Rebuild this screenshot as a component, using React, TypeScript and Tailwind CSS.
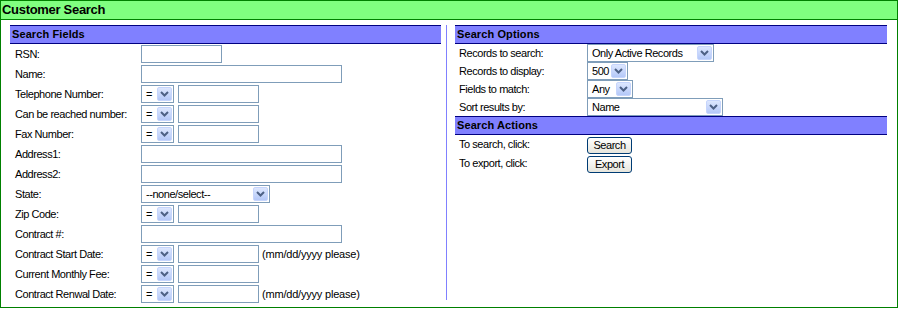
import React from 'react';

function Chevron() {
  return (
    <svg width="9" height="6" viewBox="0 0 9 6" className="block">
      <polyline points="1,1 4.5,4.5 8,1" fill="none" stroke="#4d6185" strokeWidth="2" />
    </svg>
  );
}

function Select({ value, className }: { value: string; className: string }) {
  return (
    <div className={`flex h-[18px] items-center border border-[#7f9db9] bg-white ${className}`}>
      <span className="flex-1 truncate pl-[4px] leading-none">{value}</span>
      <span className="mr-px flex h-[14px] w-[15px] items-center justify-center rounded-[2px] border border-[#c6d5fc] bg-gradient-to-b from-[#dde7fe] to-[#b4c8f8]">
        <Chevron />
      </span>
    </div>
  );
}

function TextBox({ className }: { className: string }) {
  return <div className={`h-[18px] border border-[#7f9db9] bg-white ${className}`} />;
}

function SectionHeader({ title }: { title: string }) {
  return (
    <div className="flex h-[19px] items-center border-y border-[#000080] bg-[#8080ff] pl-[2px] text-[11px] font-bold tracking-[0.1px]">
      {title}
    </div>
  );
}

function Row({ label, children }: { label: string; children: React.ReactNode }) {
  return (
    <div className="flex h-[20px] items-center">
      <div className="w-[131px] pl-[5px]">{label}</div>
      <div className="flex items-center">{children}</div>
    </div>
  );
}

function OpRow({ label, note }: { label: string; note?: boolean }) {
  return (
    <Row label={label}>
      <Select value="=" className="w-[33px]" />
      <TextBox className="ml-[4px] w-[81px]" />
      {note && <span className="ml-[3px] tracking-[-0.2px]">(mm/dd/yyyy please)</span>}
    </Row>
  );
}

function OptRow({ label, children }: { label: string; children: React.ReactNode }) {
  return (
    <div className="flex h-[18px] items-center">
      <div className="w-[132px] pl-[4px]">{label}</div>
      {children}
    </div>
  );
}

function ActionRow({ label, button }: { label: string; button: string }) {
  return (
    <div className="flex h-[19px] items-center">
      <div className="w-[132px] pl-[4px]">{label}</div>
      <button className="mt-px flex h-[17px] w-[45px] items-center justify-center rounded-[3px] border border-[#003c74] bg-gradient-to-b from-white to-[#e6e5dc] text-[11px] leading-none">
        {button}
      </button>
    </div>
  );
}

export default function App() {
  return (
    <div className="h-[308px] w-[898px] border border-[#008000] bg-white font-['Liberation_Sans',Arial,sans-serif] text-[11px] tracking-[-0.45px] text-black">
      {/* Title bar */}
      <div className="flex h-[19px] items-center border-b border-[#008000] bg-[#80ff80] pl-[1px] text-[13px] font-bold tracking-[-0.3px]">
        Customer Search
      </div>

      <div className="flex pl-[9px] pr-[10px] pt-[5px]">
        {/* Search fields */}
        <div className="w-[431px]">
          <SectionHeader title="Search Fields" />
          <Row label="RSN:">
            <TextBox className="w-[81px]" />
          </Row>
          <Row label="Name:">
            <TextBox className="w-[201px]" />
          </Row>
          <OpRow label="Telephone Number:" />
          <OpRow label="Can be reached number:" />
          <OpRow label="Fax Number:" />
          <Row label="Address1:">
            <TextBox className="w-[201px]" />
          </Row>
          <Row label="Address2:">
            <TextBox className="w-[201px]" />
          </Row>
          <Row label="State:">
            <Select value="--none/select--" className="w-[129px]" />
          </Row>
          <OpRow label="Zip Code:" />
          <Row label="Contract #:">
            <TextBox className="w-[201px]" />
          </Row>
          <OpRow label="Contract Start Date:" note />
          <OpRow label="Current Monthly Fee:" />
          <OpRow label="Contract Renwal Date:" note />
        </div>

        {/* Divider */}
        <div className="mb-[4px] ml-[5px] mr-[8px] w-px bg-[#8080ff]" />

        {/* Options and actions */}
        <div className="w-[432px]">
          <SectionHeader title="Search Options" />
          <OptRow label="Records to search:">
            <Select value="Only Active Records" className="w-[127px]" />
          </OptRow>
          <OptRow label="Records to display:">
            <Select value="500" className="w-[41px]" />
          </OptRow>
          <OptRow label="Fields to match:">
            <Select value="Any" className="w-[46px]" />
          </OptRow>
          <OptRow label="Sort results by:">
            <Select value="Name" className="w-[136px]" />
          </OptRow>
          <SectionHeader title="Search Actions" />
          <ActionRow label="To search, click:" button="Search" />
          <ActionRow label="To export, click:" button="Export" />
        </div>
      </div>
    </div>
  );
}
